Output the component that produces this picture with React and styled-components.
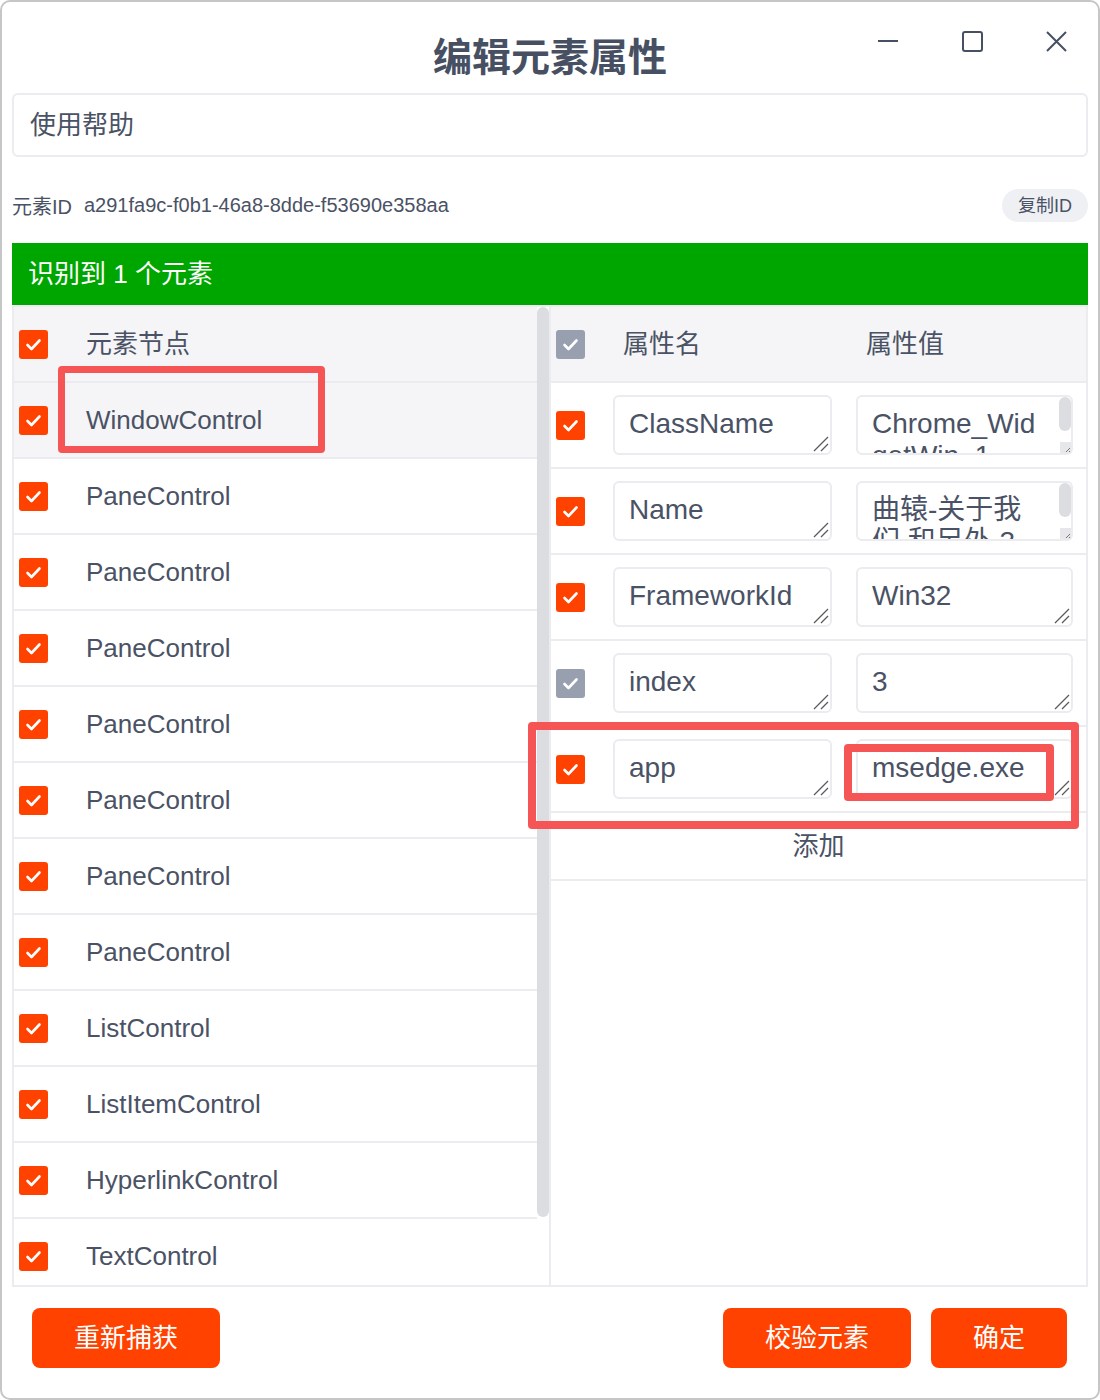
import React from 'react';
import styled, { createGlobalStyle } from 'styled-components';

const INK = '#4a5265';
const LINE = '#ebebf0';
const ORANGE = '#ff4200';
const MARK = '#f65556';
const THUMB = '#dcdde1';

const GlobalStyle = createGlobalStyle`
    html, body {
        margin: 0;
        background: #fff;
    }
    body {
        font-family: "Liberation Sans", "Noto Sans CJK SC", sans-serif;
        color: ${INK};
    }
`;

const Window = styled.div`
    width: 1100px;
    height: 1400px;
    box-sizing: border-box;
    border: 2px solid #c6c6c6;
    border-radius: 10px;
    background: #fff;
    display: flex;
    flex-direction: column;
    padding: 0 10px;
    overflow: hidden;
`;

const TitleBar = styled.div`
    display: grid;
    grid-template-columns: 1fr auto 1fr;
    height: 91px;
    margin: 0 -10px;
    flex-shrink: 0;
`;

const Title = styled.h1`
    grid-column: 2;
    margin: 0;
    padding-top: 33px;
    font-family: "Noto Sans CJK SC", sans-serif;
    font-size: 39px;
    font-weight: 700;
    line-height: 1;
    color: #475063;
`;

const Controls = styled.div`
    grid-column: 3;
    justify-self: end;
    display: flex;
    align-items: flex-start;
`;

const CtrlButton = styled.button`
    width: 84px;
    height: 78px;
    padding: 0;
    border: none;
    background: none;
    display: flex;
    align-items: center;
    justify-content: center;
    color: #475063;
`;

const HelpBox = styled.div`
    height: 64px;
    box-sizing: border-box;
    border: 2px solid ${LINE};
    border-radius: 6px;
    display: flex;
    align-items: center;
    padding: 0 0 5px 16px;
    font-size: 26px;
    flex-shrink: 0;
`;

const IdRow = styled.div`
    height: 86px;
    box-sizing: border-box;
    padding-top: 10px;
    display: flex;
    align-items: center;
    font-size: 20px;
    flex-shrink: 0;
`;

const IdValue = styled.span`
    margin-left: 12px;
`;

const CopyButton = styled.button`
    margin-left: auto;
    height: 33px;
    padding: 0 16px 2px;
    border: none;
    border-radius: 17px;
    background: #eff0f4;
    color: ${INK};
    font-family: inherit;
    font-size: 18px;
`;

const Banner = styled.div`
    height: 62px;
    box-sizing: border-box;
    background: #00a600;
    color: #fff;
    font-size: 26px;
    padding: 0 0 5px 16px;
    display: flex;
    align-items: center;
    flex-shrink: 0;
`;

const Table = styled.div`
    display: flex;
    height: 982px;
    box-sizing: border-box;
    border: 2px solid ${LINE};
    flex-shrink: 0;
`;

const NodePanel = styled.div`
    display: flex;
    flex-shrink: 0;
    width: 537px;
    box-sizing: border-box;
    border-right: 2px solid ${LINE};
`;

const NodeList = styled.div`
    flex: 1;
    min-width: 0;
    overflow: hidden;
`;

const ScrollTrack = styled.div`
    width: 12px;
    flex-shrink: 0;
`;

const ScrollThumb = styled.div`
    height: 910px;
    border-radius: 6px;
    background: ${THUMB};
`;

const NodeRow = styled.div`
    position: relative;
    height: 76px;
    box-sizing: border-box;
    border-bottom: 2px solid ${LINE};
    background: ${p => (p.$shaded ? '#f5f5f7' : '#fff')};
    display: flex;
    align-items: center;
    gap: 38px;
    padding-left: 5px;
    font-size: 26px;
`;

const NodeHeadText = styled.span`
    padding-bottom: 5px;
`;

const Box = styled.span`
    width: 29px;
    height: 29px;
    flex-shrink: 0;
    border-radius: 3px;
    background: ${p => (p.$muted ? '#98a0b0' : ORANGE)};
    display: flex;
    align-items: center;
    justify-content: center;
`;

const Mark = styled.div`
    position: absolute;
    box-sizing: border-box;
    border: 7px solid ${MARK};
    border-radius: 4px;
    pointer-events: none;
    z-index: 2;
`;

const NodeMark = styled(Mark)`
    top: -17px;
    left: 44px;
    width: 267px;
    height: 87px;
`;

const RowMark = styled(Mark)`
    top: -5px;
    left: -23px;
    width: 551px;
    height: 107px;
    border-width: 8px;
`;

const ValueMark = styled(Mark)`
    top: 17px;
    left: 293px;
    width: 210px;
    height: 57px;
    border-width: 8px;
`;

const AttrPanel = styled.div`
    flex: 1;
    min-width: 0;
    display: flex;
    flex-direction: column;
`;

const AttrGrid = styled.div`
    position: relative;
    display: grid;
    grid-template-columns: 38px 219px 217px;
    column-gap: 24px;
    align-items: center;
    box-sizing: border-box;
    border-bottom: 2px solid ${LINE};
    font-size: 26px;
`;

const AttrHead = styled(AttrGrid)`
    height: 76px;
    background: #f5f5f7;
`;

const AttrRow = styled(AttrGrid)`
    height: 86px;
`;

const BoxCell = styled.div`
    padding-left: 5px;
`;

const HeadCell = styled.div`
    padding: 0 0 5px 10px;
`;

const FieldWrap = styled.div`
    position: relative;
    height: 60px;
`;

const Field = styled.textarea`
    display: block;
    width: 100%;
    height: 60px;
    box-sizing: border-box;
    margin: 0;
    border: 2px solid ${LINE};
    border-radius: 6px;
    padding: 11px ${p => (p.$scroll ? '26px' : '14px')} 11px 14px;
    font-family: "Liberation Sans", "Noto Sans CJK SC", sans-serif;
    font-size: 28px;
    line-height: 32px;
    color: ${INK};
    background: #fff;
    resize: none;
    outline: none;
    overflow: hidden;
`;

const Grip = styled.svg`
    position: absolute;
    right: 3px;
    bottom: 3px;
    pointer-events: none;
`;

const FieldThumb = styled.div`
    position: absolute;
    top: 2px;
    right: 2px;
    width: 12px;
    height: 34px;
    border-radius: 6px;
    background: ${THUMB};
`;

const FieldCorner = styled.div`
    position: absolute;
    right: 2px;
    bottom: 2px;
    width: 11px;
    height: 11px;
    background: #e6e7ea;
    display: flex;
    align-items: flex-end;
    justify-content: flex-end;
`;

const AddRow = styled.div`
    height: 68px;
    box-sizing: border-box;
    border-bottom: 2px solid ${LINE};
    display: flex;
    align-items: center;
    justify-content: center;
    padding-bottom: 5px;
    font-size: 26px;
`;

const Footer = styled.div`
    display: flex;
    gap: 20px;
    padding: 21px 21px 0 20px;
`;

const ActionButton = styled.button`
    display: flex;
    align-items: center;
    justify-content: center;
    height: 60px;
    padding: 0 42px 4px;
    border: none;
    border-radius: 8px;
    background: ${ORANGE};
    color: #fff;
    font-family: "Noto Sans CJK SC", sans-serif;
    font-size: 26px;
    line-height: 1.2;
    white-space: nowrap;

    &:first-child {
        margin-right: auto;
    }
`;

const Check = ({ muted }) => (
    <Box $muted={muted}>
        <svg width="29" height="29" viewBox="0 0 29 29">
            <polyline points="8.5,15 12.5,19 20.5,10.5" fill="none" stroke="#fff"
                strokeWidth="2.6" strokeLinecap="round" strokeLinejoin="round" />
        </svg>
    </Box>
);

const ValueField = ({ value, scroll }) => (
    <FieldWrap>
        <Field defaultValue={value} spellCheck={false} $scroll={scroll} />
        {scroll ? (
            <>
                <FieldThumb />
                <FieldCorner>
                    <svg width="8" height="8" viewBox="0 0 8 8">
                        <path d="M7 3 L3 7 M7 6 L6 7" stroke="#777" strokeWidth="1" />
                    </svg>
                </FieldCorner>
            </>
        ) : (
            <Grip width="16" height="16" viewBox="0 0 16 16">
                <path d="M15 1 L1 15 M15 8 L8 15" stroke="#5a5a5a" strokeWidth="1.3" />
            </Grip>
        )}
    </FieldWrap>
);

const nodes = [
    'WindowControl',
    'PaneControl',
    'PaneControl',
    'PaneControl',
    'PaneControl',
    'PaneControl',
    'PaneControl',
    'PaneControl',
    'ListControl',
    'ListItemControl',
    'HyperlinkControl',
    'TextControl',
    'TextControl',
];

const attrs = [
    { name: 'ClassName', value: 'Chrome_WidgetWin_1', scroll: true },
    { name: 'Name', value: '曲辕-关于我们 和另外 3 个页面 - 个人 - Microsoft Edge', scroll: true },
    { name: 'FrameworkId', value: 'Win32' },
    { name: 'index', value: '3', muted: true },
    { name: 'app', value: 'msedge.exe', marked: true },
];

const App = () => {
    return (
        <>
            <GlobalStyle />
            <Window>
                <TitleBar>
                    <Title>编辑元素属性</Title>
                    <Controls>
                        <CtrlButton aria-label="最小化">
                            <svg width="22" height="4" viewBox="0 0 22 4">
                                <line x1="1" y1="2" x2="21" y2="2" stroke="currentColor" strokeWidth="2" />
                            </svg>
                        </CtrlButton>
                        <CtrlButton aria-label="最大化">
                            <svg width="21" height="21" viewBox="0 0 21 21">
                                <rect x="1" y="1" width="19" height="19" rx="2" fill="none" stroke="currentColor" strokeWidth="2" />
                            </svg>
                        </CtrlButton>
                        <CtrlButton aria-label="关闭">
                            <svg width="21" height="21" viewBox="0 0 21 21">
                                <path d="M1 1 L20 20 M20 1 L1 20" stroke="currentColor" strokeWidth="2" />
                            </svg>
                        </CtrlButton>
                    </Controls>
                </TitleBar>

                <HelpBox>使用帮助</HelpBox>

                <IdRow>
                    <span>元素ID</span>
                    <IdValue>a291fa9c-f0b1-46a8-8dde-f53690e358aa</IdValue>
                    <CopyButton>复制ID</CopyButton>
                </IdRow>

                <Banner>识别到 1 个元素</Banner>

                <Table>
                    <NodePanel>
                        <NodeList>
                            <NodeRow $shaded>
                                <Check />
                                <NodeHeadText>元素节点</NodeHeadText>
                            </NodeRow>
                            {nodes.map((n, i) => (
                                <NodeRow key={i} $shaded={i === 0}>
                                    <Check />
                                    <span>{n}</span>
                                    {i === 0 && <NodeMark />}
                                </NodeRow>
                            ))}
                        </NodeList>
                        <ScrollTrack>
                            <ScrollThumb />
                        </ScrollTrack>
                    </NodePanel>

                    <AttrPanel>
                        <AttrHead>
                            <BoxCell><Check muted /></BoxCell>
                            <HeadCell>属性名</HeadCell>
                            <HeadCell>属性值</HeadCell>
                        </AttrHead>
                        {attrs.map(a => (
                            <AttrRow key={a.name}>
                                <BoxCell><Check muted={a.muted} /></BoxCell>
                                <ValueField value={a.name} />
                                <ValueField value={a.value} scroll={a.scroll} />
                                {a.marked && <RowMark />}
                                {a.marked && <ValueMark />}
                            </AttrRow>
                        ))}
                        <AddRow>添加</AddRow>
                    </AttrPanel>
                </Table>

                <Footer>
                    <ActionButton>重新捕获</ActionButton>
                    <ActionButton>校验元素</ActionButton>
                    <ActionButton>确定</ActionButton>
                </Footer>
            </Window>
        </>
    );
};

export default App;
